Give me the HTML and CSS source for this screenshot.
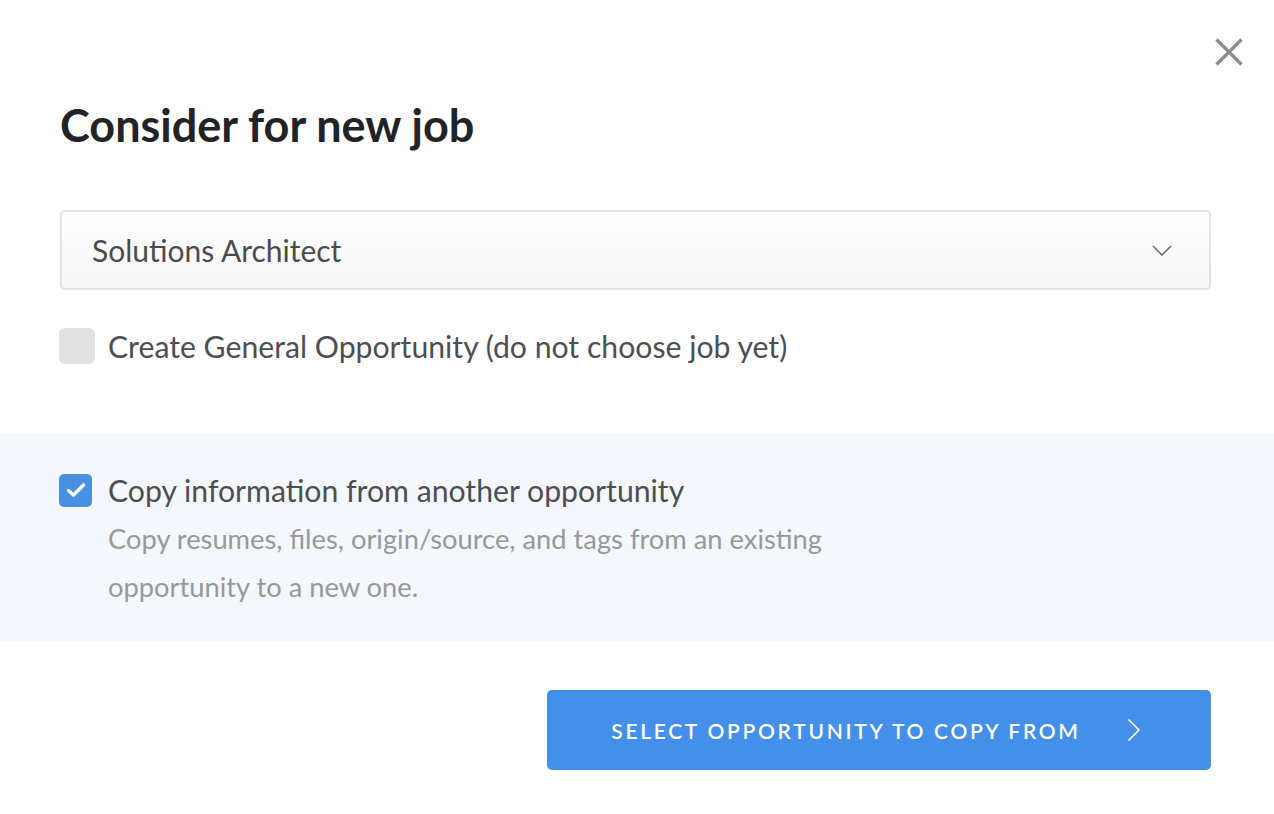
FILE: index.html
```html
<!DOCTYPE html>
<html lang="en">
<head>
<meta charset="utf-8">
<title>Consider for new job</title>
<link rel="stylesheet" href="styles.css">
</head>
<body>
<div class="modal">
  <button class="close" aria-label="Close">
    <svg width="28" height="28" viewBox="0 0 28 28"><path d="M1.5 1.5 L26.5 26.5 M26.5 1.5 L1.5 26.5" stroke="#8c8c8c" stroke-width="3.4" fill="none"/></svg>
  </button>
  <div class="section">
    <h1 class="title">Consider for new job</h1>
    <div class="select">
      <span class="select-value">Solutions Architect</span>
      <svg class="select-caret" width="20" height="11" viewBox="0 0 20 11"><path d="M1 1 L10 10 L19 1" stroke="#666" stroke-width="1.5" fill="none"/></svg>
    </div>
    <label class="check-row general">
      <span class="box"></span>
      <span class="check-label">Create General Opportunity (do not choose job yet)</span>
    </label>
  </div>
  <div class="band">
    <label class="check-row copy">
      <span class="box checked">
        <svg width="20" height="16" viewBox="0 0 20 16"><path d="M2.5 8.5 L7.5 13 L17.5 3" stroke="#fff" stroke-width="3.4" fill="none" stroke-linecap="round" stroke-linejoin="round"/></svg>
      </span>
      <span class="check-label">Copy information from another opportunity</span>
    </label>
    <p class="desc">Copy resumes, files, origin/source, and tags from an existing<br>opportunity to a new one.</p>
  </div>
  <div class="footer">
    <button class="primary">
      <span class="primary-text">Select opportunity to copy from</span>
      <svg width="14" height="24" viewBox="0 0 14 24"><path d="M1.5 1.5 L12 12 L1.5 22.5" stroke="#fff" stroke-width="1.6" fill="none"/></svg>
    </button>
  </div>
</div>
</body>
</html>
```

FILE: styles.css
```css
* { box-sizing: border-box; }
html, body { margin: 0; padding: 0; background: #fff; }
body {
  font-family: Lato, "Noto Sans", "Open Sans", sans-serif;
  color: #4a4b50;
  width: 1274px;
  height: 814px;
  overflow: hidden;
}
.modal {
  position: relative;
  width: 1274px;
  height: 814px;
  background: #fff;
}
.close {
  position: absolute;
  top: 38px;
  left: 1215px;
  width: 28px;
  height: 28px;
  padding: 0;
  border: 0;
  background: none;
  display: flex;
}
.section {
  padding: 100px 63px 0 60px;
  height: 434px;
}
.title {
  margin: 0;
  font-size: 45px;
  line-height: 50px;
  font-weight: 700;
  color: #222326;
}
.select {
  margin-top: 60px;
  height: 80px;
  border: 2px solid #e2e2e2;
  border-radius: 5px;
  background: linear-gradient(#ffffff, #f7f7f7);
  display: flex;
  align-items: center;
  justify-content: space-between;
  padding: 0 37px 0 30px;
}
.select-value {
  font-size: 30px;
  color: #4a4b50;
}
.check-row {
  display: flex;
  align-items: center;
  gap: 13px;
}
.general { margin-top: 36px; margin-left: -1px; }
.general .box {
  width: 36px;
  height: 36px;
  border-radius: 6px;
  background: #e1e1e1;
  flex: none;
}
.check-label {
  font-size: 30.2px;
  line-height: 40px;
  color: #4d4e53;
}
.band {
  background: #f4f8fc;
  height: 207px;
  padding: 36px 60px 0 59px;
}
.copy { gap: 16px; }
.copy .box.checked {
  width: 33px;
  height: 33px;
  border-radius: 5px;
  background: #4a90e2;
  display: flex;
  align-items: center;
  justify-content: center;
  flex: none;
}
.desc {
  margin: 5px 0 0 49px;
  font-size: 27.3px;
  line-height: 48px;
  color: #97989d;
}
.footer {
  padding: 49px 63px 0 0;
  display: flex;
  justify-content: flex-end;
}
.primary {
  width: 664px;
  height: 80px;
  border: 0;
  border-radius: 5px;
  background: #448fe9;
  color: #fff;
  display: flex;
  align-items: center;
  justify-content: center;
  gap: 46px;
  padding: 0 6px 0 0;
  font-family: inherit;
}
.primary-text {
  text-transform: uppercase;
  font-size: 21px;
  font-weight: 600;
  letter-spacing: 2.7px;
}
```
